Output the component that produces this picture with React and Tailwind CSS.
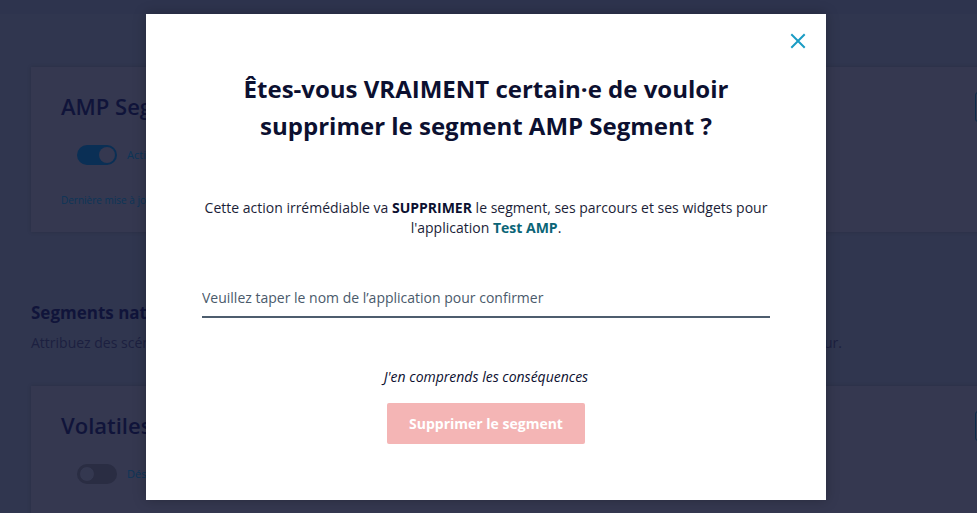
import React from "react";

function Toggle({ on }) {
  return (
    <div
      className={
        on
          ? "w-[40px] h-[20px] rounded-full flex items-center px-[2px] bg-[#0a2f55] justify-end"
          : "w-[40px] h-[20px] rounded-full flex items-center px-[2px] bg-[#2a2d43] justify-start"
      }
    >
      <div
        className={
          on
            ? "w-[16px] h-[16px] rounded-full bg-[#353850]"
            : "w-[16px] h-[16px] rounded-full bg-[#343850] border border-[#2a2d43]"
        }
      />
    </div>
  );
}

function Card({ title, on, status }) {
  return (
    <div className="bg-[#353850] shadow-[0_0_4px_rgba(0,0,0,0.15)] w-[1024px] pl-[30px] pr-[20px] pt-[22px] pb-[25px] flex justify-between">
      <div className="flex flex-col">
        <div className="text-[22px] leading-[34px] font-semibold text-[#10143a]">{title}</div>
        <div className="flex items-center gap-[10px] mt-[22px] ml-[16px]">
          <Toggle on={on} />
          <span className="text-[11px] text-[#0c3558]">{status}</span>
        </div>
        <div className="text-[10px] leading-[14px] text-[#0c3558] mt-[28px]">Dernière mise à jour le 12/03/2024 à 10:42</div>
      </div>
      <div className="w-[60px] h-[30px] border border-[#0d2d4a] rounded-[3px] mt-[3px]" />
    </div>
  );
}

export default function App() {
  return (
    <div className="relative w-[977px] h-[513px] overflow-hidden bg-[#30364f] font-['Open_Sans',sans-serif]">
      <div className="absolute inset-x-0 top-0 h-[14px] bg-[#2e344e]" />
      <div className="pl-[31px] pt-[67px] w-[1100px]">
        <Card title="AMP Segment" on status="Activé" />
        <div className="mt-[69px] text-[17px] font-bold text-[#10143a] leading-[24px]">Segments natifs</div>
        <div className="mt-[8px] text-[14px] text-[#1c2040] leading-[20px]">
          Attribuez des scénarios aux segments natifs pour personnaliser automatiquement l'expérience de chaque nouvel utilisateur.
        </div>
        <div className="mt-[33px]">
          <Card title="Volatiles" on={false} status="Désactivé" />
        </div>
      </div>

      <div className="absolute left-[146px] top-[14px] w-[680px] h-[486px] bg-white shadow-[0_0_12px_rgba(0,0,0,0.25)] flex flex-col items-center px-[56px]">
        <button className="absolute top-[19px] right-[20px] text-[#1a9cc4]">
          <svg width="16" height="16" viewBox="0 0 16 16" fill="none" stroke="currentColor" strokeWidth="2" strokeLinecap="square">
            <path d="M2 2 L14 14 M14 2 L2 14" />
          </svg>
        </button>
        <h2 className="mt-[56px] text-[24px] leading-[37px] font-bold text-[#0c1030] text-center">
          Êtes-vous VRAIMENT certain·e de vouloir
          <br />
          supprimer le segment AMP Segment ?
        </h2>
        <p className="mt-[54px] text-[14px] leading-[20px] text-[#1b1e38] text-center">
          Cette action irrémédiable va <b className="font-bold text-[#0c1030]">SUPPRIMER</b> le segment, ses parcours et ses widgets pour l'application <b className="font-bold text-[#0b6577]">Test AMP</b>.
        </p>
        <input
          className="mt-[44px] w-full h-[36px] pb-[4px] border-b-2 border-[#4d5d6e] text-[14px] text-[#1b1e38] placeholder:text-[#4a5a6b] outline-none bg-transparent"
          placeholder="Veuillez taper le nom de l’application pour confirmer"
        />
        <div className="mt-[49px] text-[14px] leading-[20px] italic text-[#0c1030]">J'en comprends les conséquences</div>
        <button className="mt-[16px] w-[198px] h-[41px] rounded-[2px] bg-[#f4b5b5] text-white font-bold text-[14px]">
          Supprimer le segment
        </button>
      </div>
    </div>
  );
}
